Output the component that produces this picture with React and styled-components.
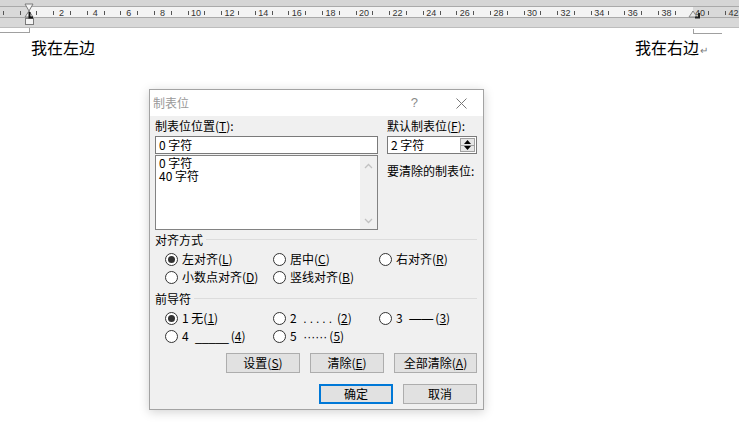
import React from 'react';
import styled, { createGlobalStyle } from 'styled-components';

const UNIT = 16.8;
const X0 = 28;
const xAt = (n) => X0 + n * UNIT;

const GlobalStyle = createGlobalStyle`
  html, body {
    margin: 0;
    padding: 0;
    background: #ffffff;
    width: 739px;
    height: 426px;
    overflow: hidden;
  }
  body {
    font-family: "Noto Sans CJK SC", "Liberation Sans", sans-serif;
    color: #000;
  }
`;

const RulerMarks = () => {
  const ticks = [];
  for (let n = -2; n <= 43; n++) {
    const x = Math.round(xAt(n + 0.5)) + 0.5;
    if (x > 0 && x < 739) ticks.push(x);
  }
  const numbers = [];
  for (let n = 2; n <= 42; n += 2) numbers.push(n);
  return (
    <RulerSvg width="739" height="28" viewBox="0 0 739 28">
      {ticks.map((x) => (
        <line key={x} x1={x} x2={x} y1="11" y2="15" stroke="#555" strokeWidth="1" />
      ))}
      {numbers.map((n) => (
        <text
          key={n}
          x={xAt(n)}
          y="16"
          textAnchor="middle"
          fontSize="9"
          fontFamily="Liberation Sans, sans-serif"
          fill="#333"
        >
          {n}
        </text>
      ))}
      {/* left indent hourglass */}
      <polygon points="25,4 33,4 29,11" fill="#f4f4f4" stroke="#7a7a7a" strokeWidth="1" />
      <polygon points="29,11 25,17 33,17" fill="#f4f4f4" stroke="#7a7a7a" strokeWidth="1" />
      <rect x="25.5" y="18.5" width="8" height="6" fill="#f4f4f4" stroke="#7a7a7a" strokeWidth="1" />
      <path d="M29.5 12 V17.5 H33" stroke="#111" strokeWidth="2" fill="none" />
      {/* right indent + right tab */}
      <polygon points="689,17 697,17 693,11" fill="#e8e8e8" stroke="#8a8a8a" strokeWidth="1" />
      <path d="M699 13 V17.5 H695" stroke="#222" strokeWidth="2" fill="none" />
    </RulerSvg>
  );
};

const Radio = ({ checked }) => (
  <RadioCircle>{checked && <RadioDot />}</RadioCircle>
);

const Option = ({ checked, children }) => (
  <OptionLabel>
    <Radio checked={checked} />
    <span>{children}</span>
  </OptionLabel>
);

const Key = ({ k }) => (
  <>
    (<u>{k}</u>)
  </>
);

const App = () => (
  <>
    <GlobalStyle />
    <Page>
      <Ruler>
        <TopBand />
        <Strip>
          <MarginZone $w={28} />
          <WorkZone />
          <MarginZone $w={46} />
        </Strip>
        <LowerBand />
        <RulerMarks />
      </Ruler>

      <CornerRow>
        <LeftCorner />
        <RightCorner />
      </CornerRow>

      <TextRow>
        <span>我在左边</span>
        <span>
          我在右边<ReturnMark>↵</ReturnMark>
        </span>
      </TextRow>

      <Dialog>
        <TitleBar>
          <Title>制表位</Title>
          <Help>?</Help>
          <Close>
            <svg width="11" height="11" viewBox="0 0 11 11">
              <path d="M0.5 0.5 L10.5 10.5 M10.5 0.5 L0.5 10.5" stroke="#777" strokeWidth="1" />
            </svg>
          </Close>
        </TitleBar>

        <Body>
          <TopSection>
            <LeftCol>
              <Label>
                制表位位置<Key k="T" />:
              </Label>
              <TextInput>0 字符</TextInput>
              <ListBox>
                <ListItems>
                  <div>0 字符</div>
                  <div>40 字符</div>
                </ListItems>
                <ScrollTrack>
                  <Chevron>
                    <svg width="9" height="6" viewBox="0 0 9 6">
                      <path d="M1 5 L4.5 1.5 L8 5" stroke="#c2c2c2" strokeWidth="1.3" fill="none" />
                    </svg>
                  </Chevron>
                  <Chevron>
                    <svg width="9" height="6" viewBox="0 0 9 6">
                      <path d="M1 1 L4.5 4.5 L8 1" stroke="#c2c2c2" strokeWidth="1.3" fill="none" />
                    </svg>
                  </Chevron>
                </ScrollTrack>
              </ListBox>
            </LeftCol>
            <RightCol>
              <Label>
                默认制表位<Key k="F" />:
              </Label>
              <Spinner>
                <SpinText>2 字符</SpinText>
                <SpinButtons>
                  <SpinHalf>
                    <svg width="7" height="4" viewBox="0 0 7 4">
                      <polygon points="0,4 7,4 3.5,0" fill="#000" />
                    </svg>
                  </SpinHalf>
                  <SpinHalf>
                    <svg width="7" height="4" viewBox="0 0 7 4">
                      <polygon points="0,0 7,0 3.5,4" fill="#000" />
                    </svg>
                  </SpinHalf>
                </SpinButtons>
              </Spinner>
              <ClearLabel>要清除的制表位:</ClearLabel>
            </RightCol>
          </TopSection>

          <GroupHeader>
            <span>对齐方式</span>
            <Rule />
          </GroupHeader>
          <OptionGrid>
            <Option checked>
              左对齐<Key k="L" />
            </Option>
            <Option>
              居中<Key k="C" />
            </Option>
            <Option>
              右对齐<Key k="R" />
            </Option>
            <Option>
              小数点对齐<Key k="D" />
            </Option>
            <Option>
              竖线对齐<Key k="B" />
            </Option>
          </OptionGrid>

          <GroupHeader $gap={5}>
            <span>前导符</span>
            <Rule />
          </GroupHeader>
          <OptionGrid>
            <Option checked>
              1 无<Key k="1" />
            </Option>
            <Option>
              2 <Leader $spacing={3}>.....</Leader>
              <Key k="2" />
            </Option>
            <Option>
              3 <Leader $spacing={0}>——</Leader>
              <Key k="3" />
            </Option>
            <Option>
              4 <Leader $spacing={0}>_____</Leader>
              <Key k="4" />
            </Option>
            <Option>
              5 <Leader $spacing={0}>······</Leader>
              <Key k="5" />
            </Option>
          </OptionGrid>

          <ButtonRow $top={8}>
            <Button>
              设置<Key k="S" />
            </Button>
            <Button>
              清除<Key k="E" />
            </Button>
            <Button $wide>
              全部清除<Key k="A" />
            </Button>
          </ButtonRow>
          <ButtonRow $top={11}>
            <Button $primary>确定</Button>
            <Button>取消</Button>
          </ButtonRow>
        </Body>
      </Dialog>
    </Page>
  </>
);

export default App;

const Page = styled.div`
  position: relative;
  width: 739px;
  height: 426px;
  background: #ffffff;
`;

const Ruler = styled.div`
  position: relative;
  height: 28px;
  display: flex;
  flex-direction: column;
`;

const TopBand = styled.div`
  height: 7px;
  background: #d5d5d5;
  border-bottom: 1px solid #a9a9a9;
  box-sizing: border-box;
`;

const Strip = styled.div`
  height: 10px;
  display: flex;
`;

const MarginZone = styled.div`
  width: ${(p) => p.$w}px;
  background: #d9d9d9;
`;

const WorkZone = styled.div`
  flex: 1;
  background: #f3f3f3;
`;

const LowerBand = styled.div`
  flex: 1;
  background: #d8d8d8;
  border-top: 1px solid #a9a9a9;
  border-bottom: 1px solid #bdbdbd;
`;

const RulerSvg = styled.svg`
  position: absolute;
  left: 0;
  top: 0;
`;

const CornerRow = styled.div`
  display: flex;
  height: 6px;
`;

const LeftCorner = styled.div`
  width: 29px;
  height: 4px;
  border-right: 1px solid #a0a0a0;
  border-bottom: 1px solid #a0a0a0;
`;

const RightCorner = styled.div`
  margin-left: auto;
  margin-right: 17px;
  margin-top: 1px;
  width: 28px;
  height: 4px;
  border-left: 1px solid #a0a0a0;
  border-bottom: 1px solid #a0a0a0;
`;

const TextRow = styled.div`
  display: flex;
  justify-content: space-between;
  padding: 0 31px 0 31px;
  margin-top: 3px;
  font-size: 16px;
  line-height: 20px;
`;

const ReturnMark = styled.span`
  font-size: 10px;
  color: #7a7a7a;
  margin-left: 1px;
`;

const Dialog = styled.div`
  position: absolute;
  left: 149px;
  top: 89px;
  width: 335px;
  height: 321px;
  box-sizing: border-box;
  background: #f0f0f0;
  border: 1px solid #a3a3a3;
  box-shadow: 0 2px 10px rgba(0, 0, 0, 0.18);
  display: flex;
  flex-direction: column;
  font-size: 12px;
  line-height: 16px;
`;

const TitleBar = styled.div`
  height: 26px;
  background: #ffffff;
  display: flex;
  align-items: center;
  padding: 0 16px 0 3px;
  color: #999999;
`;

const Title = styled.span`
  font-size: 12px;
  flex: 1;
`;

const Help = styled.span`
  font-family: "Liberation Sans", sans-serif;
  font-size: 13px;
  margin-right: 38px;
  color: #8a8a8a;
`;

const Close = styled.span`
  display: flex;
`;

const Body = styled.div`
  padding: 2px 6px 0 5px;
  display: flex;
  flex-direction: column;
`;

const TopSection = styled.div`
  display: flex;
  gap: 9px;
`;

const LeftCol = styled.div`
  width: 223px;
  display: flex;
  flex-direction: column;
`;

const RightCol = styled.div`
  flex: 1;
  display: flex;
  flex-direction: column;
`;

const Label = styled.div`
  height: 16px;
  margin-bottom: 2px;
  white-space: nowrap;
`;

const TextInput = styled.div`
  height: 18px;
  box-sizing: border-box;
  border: 1px solid #7a7a7a;
  background: #ffffff;
  padding: 0 3px;
  line-height: 16px;
`;

const ListBox = styled.div`
  margin-top: 1px;
  height: 75px;
  box-sizing: border-box;
  border: 1px solid #828282;
  background: #ffffff;
  display: flex;
`;

const ListItems = styled.div`
  flex: 1;
  padding: 0 3px;
  line-height: 13px;
  padding-top: 0;
`;

const ScrollTrack = styled.div`
  width: 17px;
  background: #f0f0f0;
  display: flex;
  flex-direction: column;
  justify-content: space-between;
  align-items: center;
  padding: 7px 0 5px;
`;

const Chevron = styled.div`
  display: flex;
`;

const Spinner = styled.div`
  height: 18px;
  box-sizing: border-box;
  border: 1px solid #7a7a7a;
  background: #ffffff;
  display: flex;
`;

const SpinText = styled.div`
  flex: 1;
  padding: 0 3px;
  line-height: 16px;
`;

const SpinButtons = styled.div`
  width: 15px;
  display: flex;
  flex-direction: column;
  margin: 1px 1px 1px 0;
  border: 1px solid #a0a0a0;
  box-sizing: border-box;
`;

const SpinHalf = styled.div`
  flex: 1;
  background: #e6e6e6;
  display: flex;
  align-items: center;
  justify-content: center;
  & + & {
    border-top: 1px solid #a0a0a0;
  }
`;

const ClearLabel = styled.div`
  margin-top: 9px;
  white-space: nowrap;
`;

const GroupHeader = styled.div`
  display: flex;
  align-items: center;
  gap: 3px;
  height: 16px;
  margin-top: ${(p) => p.$gap ?? 2}px;
`;

const Rule = styled.div`
  flex: 1;
  height: 1px;
  background: #dcdcdc;
  margin-top: -1px;
`;

const OptionGrid = styled.div`
  display: grid;
  grid-template-columns: 108px 106px 1fr;
  grid-auto-rows: 18px;
  padding-left: 10px;
  margin-top: 2px;
`;

const OptionLabel = styled.label`
  display: flex;
  align-items: center;
  gap: 4px;
  white-space: nowrap;
`;

const RadioCircle = styled.span`
  width: 13px;
  height: 13px;
  box-sizing: border-box;
  border: 1px solid #333333;
  border-radius: 50%;
  background: #ffffff;
  display: flex;
  align-items: center;
  justify-content: center;
  flex-shrink: 0;
`;

const RadioDot = styled.span`
  width: 7px;
  height: 7px;
  border-radius: 50%;
  background: #333333;
`;

const Leader = styled.span`
  font-family: "Liberation Sans", sans-serif;
  margin: 0 2px 0 4px;
  letter-spacing: ${(p) => p.$spacing}px;
`;

const ButtonRow = styled.div`
  display: flex;
  justify-content: flex-end;
  gap: 10px;
  margin-top: ${(p) => p.$top}px;
`;

const Button = styled.div`
  width: ${(p) => (p.$wide ? 83 : 74)}px;
  height: 20px;
  box-sizing: border-box;
  background: #e1e1e1;
  border: ${(p) => (p.$primary ? '2px solid #0078d7' : '1px solid #adadad')};
  display: flex;
  align-items: center;
  justify-content: center;
  white-space: nowrap;
`;
